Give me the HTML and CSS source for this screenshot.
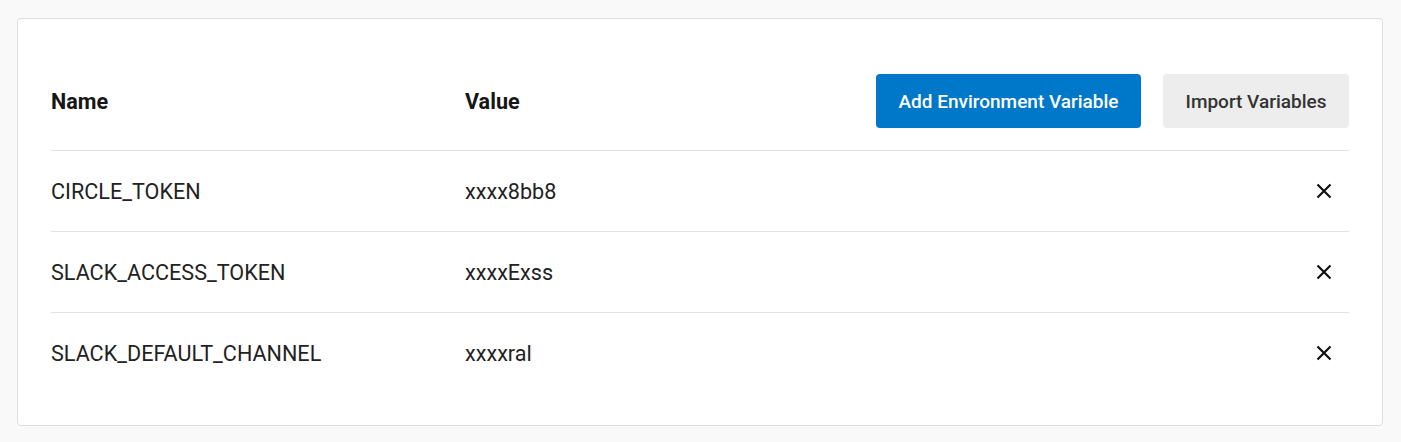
FILE: index.html
```html
<!DOCTYPE html>
<html>
<head>
<meta charset="utf-8">
<link rel="stylesheet" href="styles.css">
</head>
<body>
<div class="card">
  <div class="head">
    <div class="col-name">Name</div>
    <div class="col-value">Value</div>
    <div class="actions">
      <button class="btn btn-primary">Add Environment Variable</button>
      <button class="btn btn-secondary">Import Variables</button>
    </div>
  </div>
  <div class="row">
    <div class="col-name">CIRCLE_TOKEN</div>
    <div class="col-value">xxxx8bb8</div>
    <button class="del"><svg viewBox="0 0 16 16" width="16" height="16"><path d="M1.5 1.5 L14.5 14.5 M14.5 1.5 L1.5 14.5" stroke="#111" stroke-width="2.2" fill="none"/></svg></button>
  </div>
  <div class="row">
    <div class="col-name">SLACK_ACCESS_TOKEN</div>
    <div class="col-value">xxxxExss</div>
    <button class="del"><svg viewBox="0 0 16 16" width="16" height="16"><path d="M1.5 1.5 L14.5 14.5 M14.5 1.5 L1.5 14.5" stroke="#111" stroke-width="2.2" fill="none"/></svg></button>
  </div>
  <div class="row last">
    <div class="col-name">SLACK_DEFAULT_CHANNEL</div>
    <div class="col-value">xxxxral</div>
    <button class="del"><svg viewBox="0 0 16 16" width="16" height="16"><path d="M1.5 1.5 L14.5 14.5 M14.5 1.5 L1.5 14.5" stroke="#111" stroke-width="2.2" fill="none"/></svg></button>
  </div>
</div>
</body>
</html>
```

FILE: styles.css
```css
html, body {
  margin: 0;
  padding: 0;
  background: #f9f9f9;
}
body {
  padding: 18px 18px 0 17px;
  font-family: Roboto, "Liberation Sans", sans-serif;
  color: #1f1f1f;
}
.card {
  box-sizing: border-box;
  width: 1366px;
  height: 408px;
  background: #fff;
  border: 1px solid #dedede;
  border-radius: 4px;
  padding: 33px 33px 0 33px;
}
.head {
  display: flex;
  align-items: center;
  padding: 22px 0 22px;
  border-bottom: 1px solid #e2e2e2;
}
.col-name {
  width: 414px;
  flex: none;
}
.col-value {
  flex: 1;
}
.head .col-name, .head .col-value {
  font-weight: 700;
  font-size: 21.6px;
  color: #161616;
}
.actions {
  display: flex;
  gap: 22px;
}
.btn {
  height: 54px;
  border: none;
  border-radius: 4px;
  font-family: Roboto, "Liberation Sans", sans-serif;
  font-weight: 500;
  font-size: 19px;
  padding: 0;
  cursor: pointer;
}
.btn-primary {
  background: #0078ca;
  color: #fff;
  width: 265px;
}
.btn-secondary {
  background: #ededed;
  color: #333;
  width: 186px;
}
.row {
  display: flex;
  align-items: center;
  height: 80px;
  border-bottom: 1px solid #e2e2e2;
  font-size: 21.6px;
  color: #222;
}
.row.last {
  border-bottom: none;
}
.del {
  background: none;
  border: none;
  padding: 0;
  margin-right: 17px;
  width: 16px;
  height: 16px;
  display: flex;
}
```
